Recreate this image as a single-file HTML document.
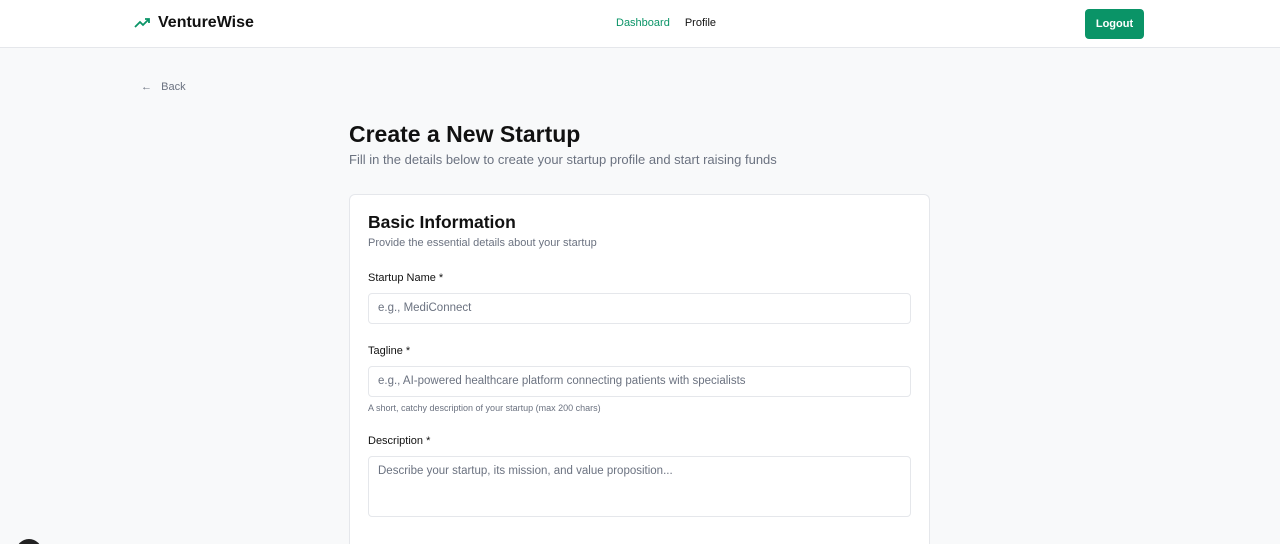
<!DOCTYPE html>
<html style="width:1280px;height:544px;overflow:hidden"><head><style>
*{box-sizing:border-box;margin:0;padding:0}
body{width:1280px;height:544px;overflow:hidden;background:#f8f9fa;font-family:"Liberation Sans",sans-serif;position:relative}
.nav{height:48px;background:#fff;border-bottom:1px solid #e5e7eb;position:relative}
.logo{position:absolute;left:134px;top:14px;font-weight:700;font-size:16px;color:#111;display:flex;align-items:center;gap:6px}
.links{position:absolute;left:616px;top:17px;font-size:11px}
.links span{margin-right:15px}
.btn{position:absolute;left:1085px;top:9px;width:59px;height:30px;background:#0a9467;color:#fff;border-radius:4px;font-size:11px;font-weight:700;display:flex;align-items:center;justify-content:center}
.back{position:absolute;left:141px;top:81px;font-size:11px;color:#6b7280}
h1{position:absolute;left:349px;top:121px;font-size:23px;font-weight:700;color:#111}
.sub{position:absolute;left:349px;top:152px;font-size:13px;color:#6b7280}
.card{position:absolute;left:349px;top:194px;width:581px;height:350px;background:#fff;border:1px solid #e5e7eb;border-bottom:none;border-radius:6px 6px 0 0}
.card h2{position:absolute;left:18px;top:17px;font-size:17.5px;font-weight:700;color:#111}
.t{position:absolute;left:18px;font-size:11px}
.in{position:absolute;left:18px;width:543px;height:31px;border:1px solid #e5e7eb;border-radius:4px;font-size:11.5px;color:#6b7280;padding:8px 9px}
</style></head><body>
<div class="nav">
<div class="logo"><svg width="18" height="12" viewBox="0 0 18 12" fill="none" stroke="#0a9467" stroke-width="1.8"><path d="M1 10l5-5 3 3 6-6M11 2h4v4"/></svg>VentureWise</div>
<div class="links"><span style="color:#0a9467">Dashboard</span><span style="color:#111">Profile</span></div>
<div class="btn">Logout</div>
</div>
<div class="back">←&nbsp;&nbsp; Back</div>
<h1>Create a New Startup</h1>
<div class="sub">Fill in the details below to create your startup profile and start raising funds</div>
<div class="card">
<h2>Basic Information</h2>
<div class="t" style="top:42px;color:#6b7280">Provide the essential details about your startup</div>
<div class="t" style="top:77px;color:#111">Startup Name *</div>
<div class="in" style="top:98px">e.g., MediConnect</div>
<div class="t" style="top:150px;color:#111">Tagline *</div>
<div class="in" style="top:171px">e.g., AI-powered healthcare platform connecting patients with specialists</div>
<div class="t" style="top:208px;font-size:9px;color:#6b7280">A short, catchy description of your startup (max 200 chars)</div>
<div class="t" style="top:240px;color:#111">Description *</div>
<div class="in" style="top:261px;height:61px">Describe your startup, its mission, and value proposition...</div>
</div>
<div style="position:absolute;left:16px;top:539px;width:26px;height:5px;overflow:hidden"><div style="width:26px;height:26px;border-radius:50%;background:#222"></div></div>
</body></html>
